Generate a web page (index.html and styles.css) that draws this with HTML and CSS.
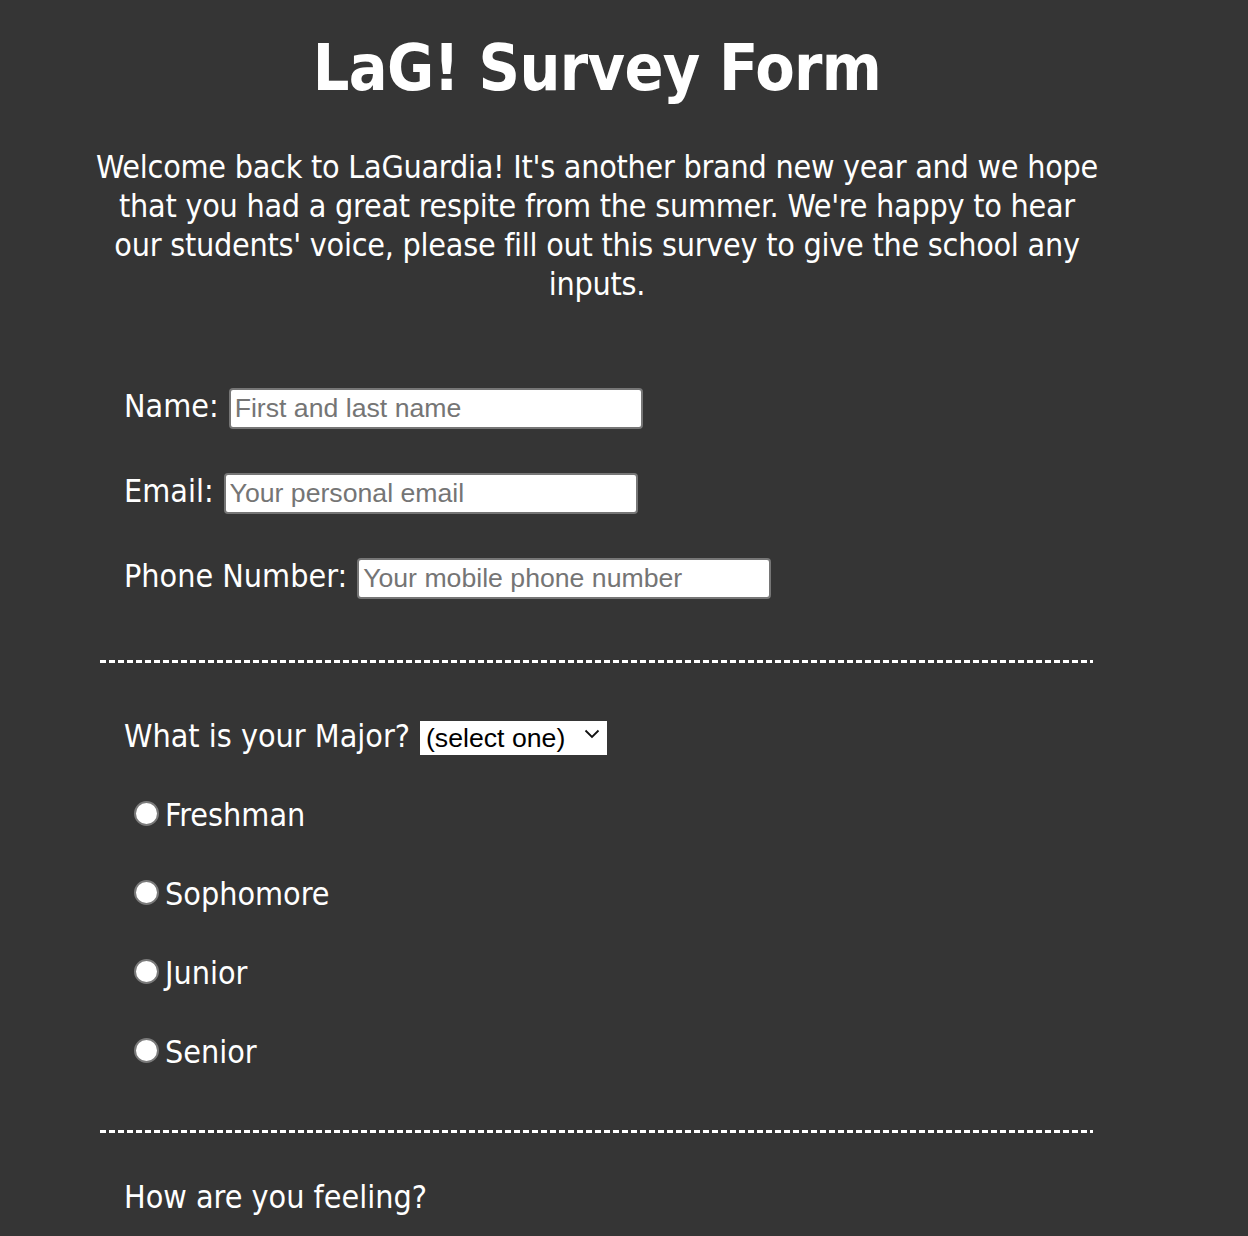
FILE: index.html
```html
<!DOCTYPE html>
<html lang="en">
<head>
<meta charset="utf-8">
<title>LaG! Survey Form</title>
<link rel="stylesheet" href="styles.css">
</head>
<body>
<main class="page">
  <h1 class="title">LaG! Survey Form</h1>
  <p class="intro">Welcome back to LaGuardia! It's another brand new year and we hope that you had a great respite from the summer. We're happy to hear our students' voice, please fill out this survey to give the school any inputs.</p>

  <form class="survey">
    <section class="group contact">
      <div class="row">
        <label class="lbl" for="name">Name:</label>
        <input class="field" id="name" type="text" placeholder="First and last name">
      </div>
      <div class="row">
        <label class="lbl" for="email">Email:</label>
        <input class="field" id="email" type="email" placeholder="Your personal email">
      </div>
      <div class="row">
        <label class="lbl" for="phone">Phone Number:</label>
        <input class="field" id="phone" type="tel" placeholder="Your mobile phone number">
      </div>
    </section>

    <div class="divider"></div>

    <section class="group year">
      <div class="row">
        <label class="lbl" for="major">What is your Major?</label>
        <span class="select-wrap">
          <select class="select" id="major">
            <option>(select one)</option>
          </select>
          <svg class="chev" width="16" height="10" viewBox="0 0 16 10"><path d="M1.5 1.5 L8 8 L14.5 1.5" fill="none" stroke="#111" stroke-width="1.8"/></svg>
        </span>
      </div>
      <label class="radio-row"><input class="radio" type="radio" name="year">Freshman</label>
      <label class="radio-row"><input class="radio" type="radio" name="year">Sophomore</label>
      <label class="radio-row"><input class="radio" type="radio" name="year">Junior</label>
      <label class="radio-row"><input class="radio" type="radio" name="year">Senior</label>
    </section>

    <div class="divider"></div>

    <section class="group feeling">
      <p class="question">How are you feeling?</p>
    </section>
  </form>
</main>
</body>
</html>
```

FILE: styles.css
```css
html, body {
  margin: 0;
  padding: 0;
}

body {
  background: #353535;
  color: #ffffff;
  font-family: "DejaVu Sans Condensed", "DejaVu Sans", Verdana, sans-serif;
  font-stretch: condensed;
  font-size: 32px;
  line-height: 39px;
}

.page {
  width: 1000px;
  margin-left: 97px;
  padding-top: 30px;
}

.title {
  margin: 0;
  font-size: 64px;
  line-height: 77px;
  font-weight: bold;
  letter-spacing: -0.65px;
  text-align: center;
}

.intro {
  margin: 41px -5px 0;
  letter-spacing: -0.25px;
  text-align: center;
}

.survey {
  display: flex;
  flex-direction: column;
  margin-top: 83px;
}

.group {
  display: flex;
  flex-direction: column;
  padding-left: 27px;
}

.contact {
  gap: 43px;
}

.row {
  display: flex;
  align-items: baseline;
  gap: 10px;
}

.lbl {
  white-space: nowrap;
}

.field {
  box-sizing: border-box;
  width: 414px;
  height: 41px;
  margin: 0;
  padding: 2px 4px;
  border: 2px solid #767676;
  border-radius: 4px;
  background: #ffffff;
  color: #000;
  font-family: "Liberation Sans", Arial, sans-serif;
  font-size: 26.67px;
}

.field::placeholder {
  color: #757575;
}

.divider {
  width: 993px;
  height: 3px;
  margin: 61px 0 0 3px;
  background: repeating-linear-gradient(to right, #ffffff 0 6px, transparent 6px 9px);
}

.year {
  margin-top: 54px;
  margin-bottom: -3px;
  gap: 40px;
}

.select-wrap {
  position: relative;
  display: inline-block;
}

.select {
  appearance: none;
  -webkit-appearance: none;
  box-sizing: border-box;
  width: 187px;
  height: 34px;
  margin: 0;
  padding: 0 0 0 6px;
  border: none;
  border-radius: 0;
  background: #ffffff;
  color: #000;
  font-family: "Liberation Sans", Arial, sans-serif;
  font-size: 26.67px;
}

.chev {
  position: absolute;
  right: 7px;
  top: 12px;
  pointer-events: none;
}

.radio-row {
  display: block;
}

.radio {
  appearance: none;
  -webkit-appearance: none;
  box-sizing: border-box;
  width: 25px;
  height: 25px;
  margin: 0 6px 0 10px;
  border: 2px solid #7a7a7a;
  border-radius: 50%;
  background: #ffffff;
  vertical-align: baseline;
}

.feeling {
  margin-top: 45px;
}

.question {
  margin: 0;
}
```
